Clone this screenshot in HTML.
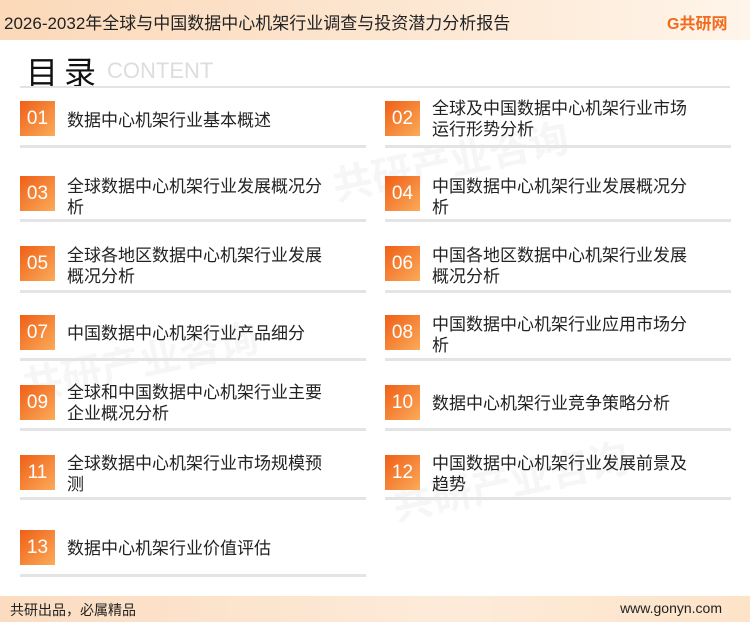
<!DOCTYPE html>
<html><head><meta charset="utf-8"><style>
*{margin:0;padding:0;box-sizing:border-box}
body{width:750px;height:622px;position:relative;background:#fff;font-family:"Liberation Sans","Noto Sans CJK SC",sans-serif;overflow:hidden;color:#222}
.hdr{position:absolute;left:0;top:0;width:750px;height:40px;background:linear-gradient(90deg,#fbd9b9,#fde8d4 60%,#fff5ea)}
.hdr .t{position:absolute;left:4px;top:9px;font-size:17px;color:#222}
.logo{position:absolute;left:667px;top:10px;font-size:16px;font-weight:bold;color:#f26a1b}
.title{position:absolute;left:26px;top:48px;font-size:32px;color:#111;letter-spacing:6px}
.ct{position:absolute;left:107px;top:58px;font-size:22px;color:#ddd}
.hl{position:absolute;top:86px;height:2px;background:#e3e3e3}
.box{position:absolute;width:35px;height:35px;background:linear-gradient(135deg,#ef5f16,#fbab5a);color:#fff;font-size:19px;text-align:center;line-height:35px}
.tx{position:absolute;font-size:17px;line-height:21px;color:#222;width:258px}
.ln{position:absolute;height:3px;background:#e4e4e4;width:346px}
.ftr{position:absolute;left:0;top:596px;width:750px;height:26px;background:linear-gradient(90deg,#fbdcc0,#fdebd9 60%,#fde3c8)}
.ftr .a{position:absolute;left:10px;top:4px;font-size:14px}
.ftr .b{position:absolute;right:28px;top:4px;font-size:14px}
.wm{position:absolute;color:#f6f6f6;font-size:40px;font-weight:bold;transform:rotate(-12deg)}
</style></head><body>
<div class="wm" style="left:330px;top:130px">共研产业咨询</div>
<div class="wm" style="left:20px;top:330px">共研产业咨询</div>
<div class="wm" style="left:390px;top:450px">共研产业咨询</div>
<div class="hdr"><div class="t">2026-2032年全球与中国数据中心机架行业调查与投资潜力分析报告</div><div class="logo">G共研网</div></div>
<div class="title">目录</div><div class="ct">CONTENT</div>
<div class="hl" style="left:20px;width:710px"></div>

<div class="box" style="left:20px;top:101px">01</div><div class="tx" style="left:67px;top:110px">数据中心机架行业基本概述</div>
<div class="box" style="left:385px;top:101px">02</div><div class="tx" style="left:432px;top:98px">全球及中国数据中心机架行业市场运行形势分析</div>
<div class="ln" style="left:20px;top:145px"></div><div class="ln" style="left:385px;top:145px"></div>

<div class="box" style="left:20px;top:176px">03</div><div class="tx" style="left:67px;top:176px">全球数据中心机架行业发展概况分析</div>
<div class="box" style="left:385px;top:176px">04</div><div class="tx" style="left:432px;top:176px">中国数据中心机架行业发展概况分析</div>
<div class="ln" style="left:20px;top:219px"></div><div class="ln" style="left:385px;top:219px"></div>

<div class="box" style="left:20px;top:246px">05</div><div class="tx" style="left:67px;top:245px">全球各地区数据中心机架行业发展概况分析</div>
<div class="box" style="left:385px;top:246px">06</div><div class="tx" style="left:432px;top:245px">中国各地区数据中心机架行业发展概况分析</div>
<div class="ln" style="left:20px;top:290px"></div><div class="ln" style="left:385px;top:290px"></div>

<div class="box" style="left:20px;top:315px">07</div><div class="tx" style="left:67px;top:323px">中国数据中心机架行业产品细分</div>
<div class="box" style="left:385px;top:315px">08</div><div class="tx" style="left:432px;top:314px">中国数据中心机架行业应用市场分析</div>
<div class="ln" style="left:20px;top:358px"></div><div class="ln" style="left:385px;top:358px"></div>

<div class="box" style="left:20px;top:385px">09</div><div class="tx" style="left:67px;top:382px">全球和中国数据中心机架行业主要企业概况分析</div>
<div class="box" style="left:385px;top:385px">10</div><div class="tx" style="left:432px;top:393px">数据中心机架行业竞争策略分析</div>
<div class="ln" style="left:20px;top:428px"></div><div class="ln" style="left:385px;top:428px"></div>

<div class="box" style="left:20px;top:455px">11</div><div class="tx" style="left:67px;top:453px">全球数据中心机架行业市场规模预测</div>
<div class="box" style="left:385px;top:455px">12</div><div class="tx" style="left:432px;top:453px">中国数据中心机架行业发展前景及趋势</div>
<div class="ln" style="left:20px;top:497px"></div><div class="ln" style="left:385px;top:497px"></div>

<div class="box" style="left:20px;top:530px">13</div><div class="tx" style="left:67px;top:538px">数据中心机架行业价值评估</div>
<div class="ln" style="left:20px;top:574px"></div>

<div class="ftr"><div class="a">共研出品，必属精品</div><div class="b">www.gonyn.com</div></div>
</body></html>
